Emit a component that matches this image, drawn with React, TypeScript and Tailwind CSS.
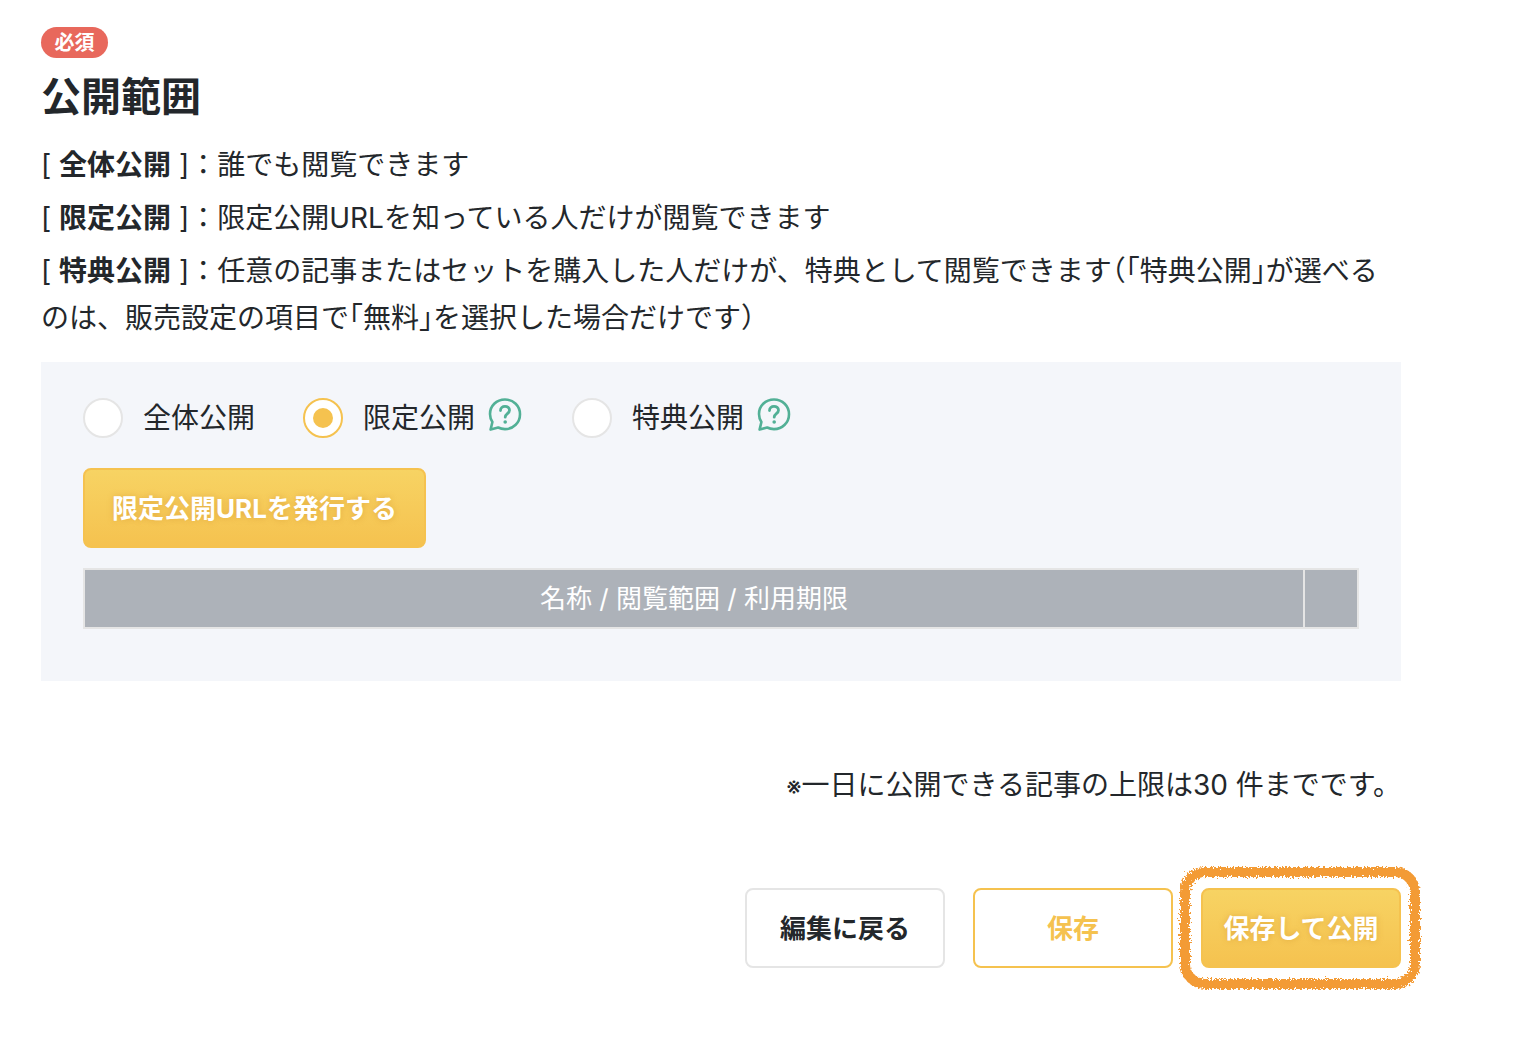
import React from "react";

const font = { fontFamily: 'Inter, "Noto Sans CJK JP", "Noto Sans", sans-serif' };

function HelpIcon() {
  return (
    <svg width="36" height="36" viewBox="0 0 36 36" fill="none" className="ml-[12px] -mt-[7px]">
      <path
        d="M18 2.500C9.300 2.500 3 9 3 17c0 3 .9 5.700 2.400 8L3.600 32.600l7.600-2.100c2.100 1.100 4.400 1.600 6.800 1.600 8.500 0 15-6.600 15-14.900S26.500 2.500 18 2.500Z"
        stroke="#52b096"
        strokeWidth="2.600"
        strokeLinejoin="round"
      />
      <path d="M13.500 13.500c0-2.600 2-4.200 4.500-4.200s4.500 1.500 4.500 3.900c0 3.400-4.300 3.500-4.300 7" stroke="#52b096" strokeWidth="2.800" strokeLinecap="round" />
      <circle cx="18.200" cy="25" r="1.800" fill="#52b096" />
    </svg>
  );
}

function Radio({ label, checked, help }: { label: string; checked?: boolean; help?: boolean }) {
  return (
    <div className="flex items-center">
      <span
        className={`flex h-10 w-10 items-center justify-center rounded-full border-2 bg-white ${
          checked ? "border-[#f5c24f]" : "border-[#e5e5e5]"
        }`}
      >
        {checked && <span className="h-5 w-5 rounded-full bg-[#f5c24f]" />}
      </span>
      <span className="ml-5 text-[28px] leading-10 text-[#23272b]">{label}</span>
      {help && <HelpIcon />}
    </div>
  );
}

// half-width brackets, the reference sets these tight
function Halt({ children }: { children: React.ReactNode }) {
  return <span className='[font-feature-settings:"halt"]'>{children}</span>;
}

function Scribble() {
  return (
    <svg className="absolute left-[-30px] top-[-30px] pointer-events-none" width="260" height="140" viewBox="0 0 260 140">
      <defs>
        <filter id="rough" x="-5%" y="-5%" width="110%" height="110%">
          <feTurbulence type="fractalNoise" baseFrequency="0.55" numOctaves="3" seed="4" />
          <feDisplacementMap in="SourceGraphic" scale="8" />
        </filter>
      </defs>
      <rect x="14" y="14" width="230" height="112" rx="20" fill="none" stroke="#f39b36" strokeWidth="10" filter="url(#rough)" />
    </svg>
  );
}

export default function App() {
  return (
    <div className="min-h-[1042px] bg-white pl-[41px] pt-[27px] text-[#23272b]" style={font}>
      <div className="w-[1360px]">
        <span className="flex h-[31px] w-[67px] items-center justify-center rounded-full bg-[#e8685c] text-[20px] font-bold leading-none text-white">
          必須
        </span>
        <h2 className="mt-[13px] text-[40px] font-bold leading-[52px]">公開範囲</h2>

        <div className="mt-[19px] w-[1350px] text-[28px] leading-[47px]">
          <p>
            [ <b>全体公開</b> ]：誰でも閲覧できます
          </p>
          <p className="mt-[6px]">
            [ <b>限定公開</b> ]：限定公開URLを知っている人だけが閲覧できます
          </p>
          <p className="mt-[6px]">
            [ <b>特典公開</b> ]：任意の記事またはセットを購入した人だけが、特典として閲覧できます<Halt>（「</Halt>特典公開<Halt>」</Halt>が選べるのは、販売設定の項目で<Halt>「</Halt>無料<Halt>」</Halt>を選択した場合だけです<Halt>）</Halt>
          </p>
        </div>

        <div className="mt-[20px] h-[319px] bg-[#f4f6fa] px-[42px] pt-9">
          <div className="flex items-center">
            <Radio label="全体公開" />
            <div className="ml-[48px]">
              <Radio label="限定公開" checked help />
            </div>
            <div className="ml-[49px]">
              <Radio label="特典公開" help />
            </div>
          </div>

          <button className="mt-[30px] flex h-20 w-[343px] items-center justify-center rounded-lg border-2 border-[#f5c24f] bg-gradient-to-b from-[#f7d363] to-[#f5c24f] text-[26px] font-bold text-white [text-shadow:0_0_6px_rgba(200,130,30,0.4)]">
            限定公開URLを発行する
          </button>

          <div className="mt-5 flex h-[61px] w-[1276px] border-2 border-[#e5e5e5] bg-[#adb2b9] text-[26px] text-white">
            <div className="flex flex-1 items-center justify-center border-r-2 border-[#e5e5e5] pb-[1px]">名称 / 閲覧範囲 / 利用期限</div>
            <div className="w-[52px]" />
          </div>
        </div>

        <p className="mt-[81px] text-right text-[28px] leading-[47px]">
          <span className="text-[24px]">※</span>一日に公開できる記事の上限は30 件までです。
        </p>

        <div className="mt-[78px] flex justify-end gap-7">
          <button className="h-20 w-[200px] rounded-lg border-2 border-[#e5e5e5] bg-white text-[26px] font-bold">編集に戻る</button>
          <button className="h-20 w-[200px] rounded-lg border-2 border-[#f5c24f] bg-white text-[26px] font-bold text-[#f5c24f]">保存</button>
          <div className="relative">
            <button className="h-20 w-[200px] rounded-lg border-2 border-[#f5c24f] bg-gradient-to-b from-[#f7d363] to-[#f5c24f] text-[26px] font-bold text-white [text-shadow:0_0_6px_rgba(200,130,30,0.4)]">
              保存して公開
            </button>
            <Scribble />
          </div>
        </div>
      </div>
    </div>
  );
}
